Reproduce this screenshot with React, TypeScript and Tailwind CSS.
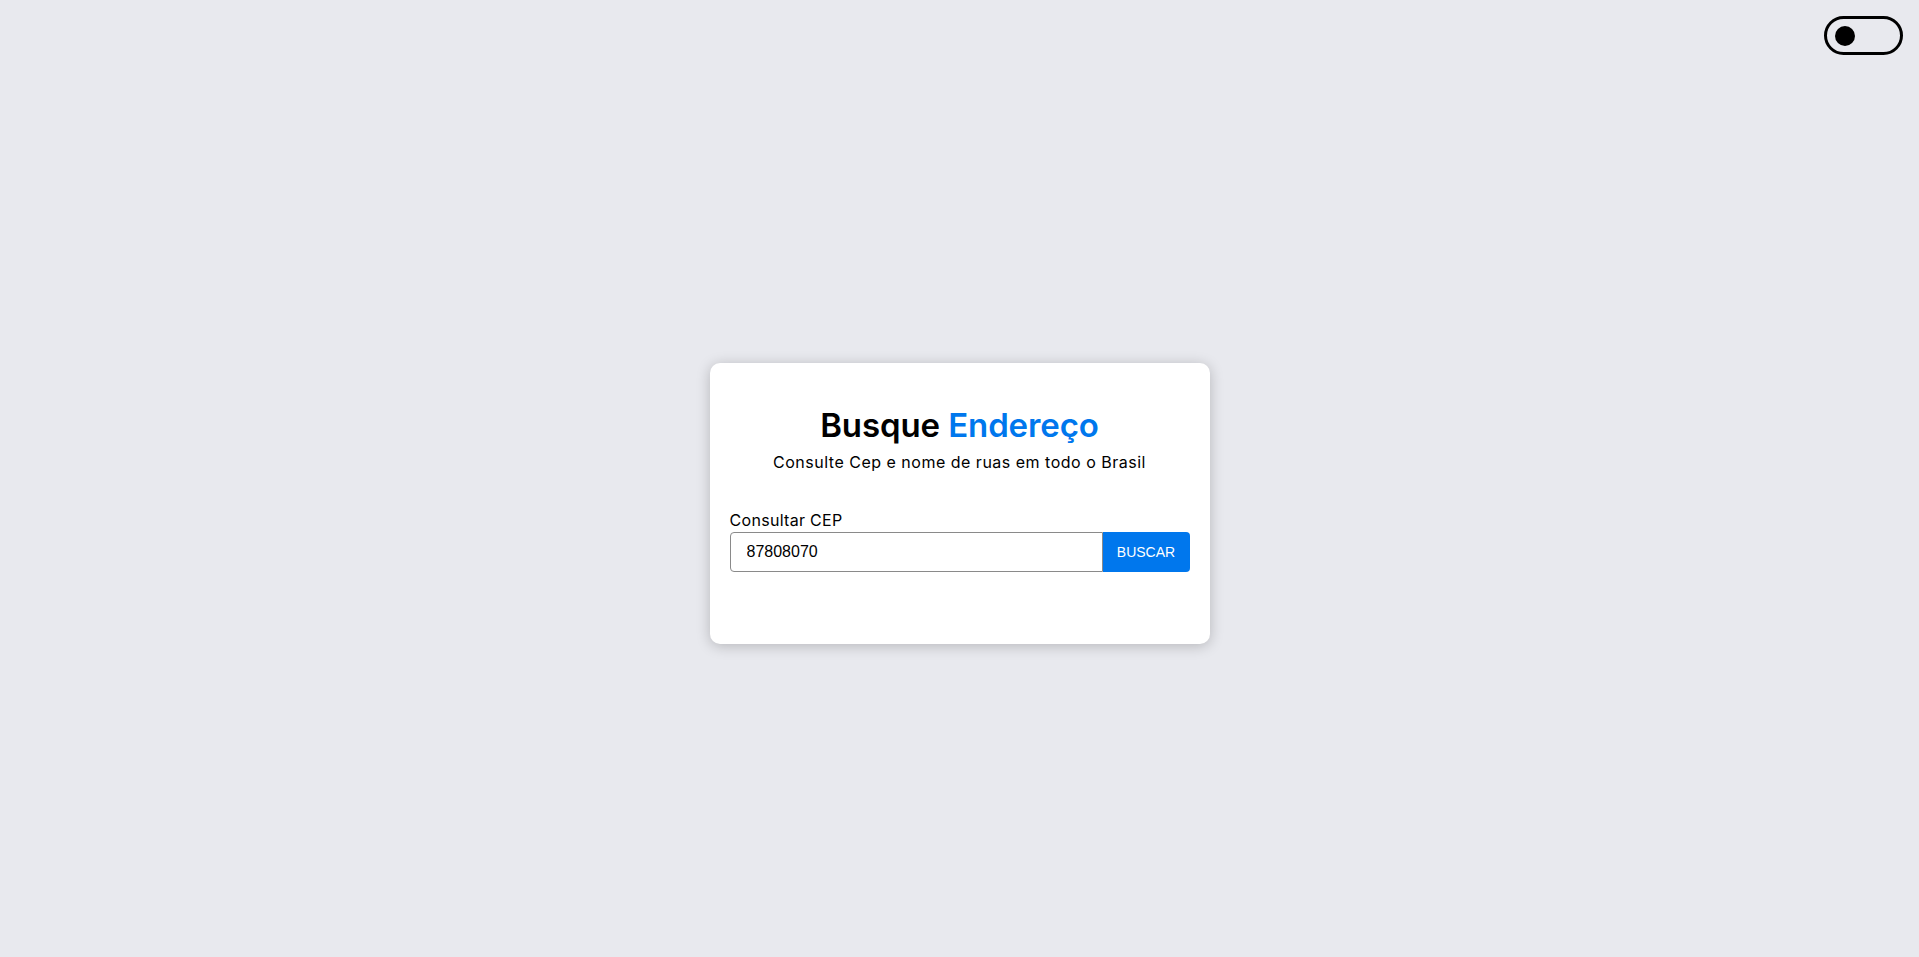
import { useState } from 'react'

export default function App() {
  const [dark, setDark] = useState(false)
  const [cep, setCep] = useState('87808070')

  return (
    <div className="relative min-h-screen bg-[#e8e9ee] font-['Inter',sans-serif] text-black">
      {/* Tema */}
      <button
        onClick={() => setDark(!dark)}
        className="absolute right-4 top-4 flex h-[39px] w-[79px] items-center rounded-full border-[3px] border-black px-[8px]"
      >
        <span className="h-[20px] w-[20px] rounded-full bg-black" />
      </button>

      <div className="flex min-h-screen items-center justify-center pt-[50px]">
        <div className="w-[500px] rounded-[10px] bg-white px-5 pb-[72px] pt-[40px] shadow-[0_2px_14px_rgba(0,0,0,0.22)]">
          <h1 className="text-center text-[33px] font-semibold leading-[44px] tracking-[-0.1px]">
            Busque <span className="text-[#0077ed]">Endereço</span>
          </h1>
          <p className="mt-[3px] text-center text-[16px] leading-[24px] tracking-[0.5px]">
            Consulte Cep e nome de ruas em todo o Brasil
          </p>

          <label className="mt-[34px] block text-[16px] leading-[24px] tracking-[0.3px]">Consultar CEP</label>
          <div className="flex h-[40px]">
            <input
              value={cep}
              onChange={(e) => setCep(e.target.value)}
              className="h-full flex-1 rounded-l-[4px] border border-[#8a8a8a] px-4 font-['Liberation_Sans',sans-serif] text-[16px] text-black outline-none"
            />
            <button className="h-full w-[87px] rounded-r-[4px] bg-[#0077ed] font-['Liberation_Sans',sans-serif] text-[14px] text-white">
              BUSCAR
            </button>
          </div>
        </div>
      </div>
    </div>
  )
}
